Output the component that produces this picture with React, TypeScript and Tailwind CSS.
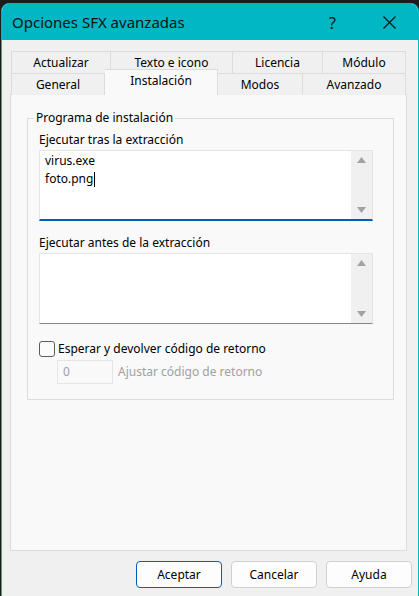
import React from 'react';

const backTabs = [
  { label: 'Actualizar', w: 'w-[100px]' },
  { label: 'Texto e icono', w: 'w-[122px]' },
  { label: 'Licencia', w: 'w-[90px]' },
  { label: 'Módulo', w: 'w-[83px]' },
];

function ScrollBox({ lines, focused }: { lines: string[]; focused?: boolean }) {
  return (
    <div
      className={
        'flex h-[71px] w-[334px] bg-white border border-[#e5e5e5] ' +
        (focused ? 'border-b-2 border-b-[#005fb8]' : 'border-b-[#868686]')
      }
    >
      <div className="flex-1 pl-[5px] pt-[1px] text-[12px] leading-[18px] text-black">
        {lines.map((l, i) => (
          <div key={i} className="flex items-center">
            {l}
            {focused && i === lines.length - 1 && <span className="ml-[1px] h-[15px] w-px bg-black" />}
          </div>
        ))}
      </div>
      <div className="flex w-[21px] flex-col items-center justify-between bg-[#f0f0f0] py-[6px]">
        <svg width="9" height="6" viewBox="0 0 9 6">
          <path d="M4.5 0 L9 6 L0 6 Z" fill="#a3a3a3" />
        </svg>
        <svg width="9" height="6" viewBox="0 0 9 6">
          <path d="M0 0 L9 0 L4.5 6 Z" fill="#a3a3a3" />
        </svg>
      </div>
    </div>
  );
}

export default function App() {
  return (
    <div className="h-[596px] w-[419px] overflow-hidden bg-[#1c1c1c] pl-px pt-[3px] font-['Noto_Sans',sans-serif] text-[12px] text-black">
      <div className="flex h-[600px] w-[418px] flex-col overflow-hidden rounded-[8px] border border-[#00b7c3] bg-[#f0f0f0]">
        {/* title bar */}
        <div className="flex h-[36px] shrink-0 items-center bg-[#00b7c3] pl-[10px] pt-[1px]">
          <span className="text-[15px] text-[#111]">Opciones SFX avanzadas</span>
          <span className="ml-auto mr-[47px] text-[16px] text-[#111]">?</span>
          <svg className="mr-[22px]" width="13" height="13" viewBox="0 0 13 13">
            <path d="M0.5 0.5 L12.5 12.5 M12.5 0.5 L0.5 12.5" stroke="#111" strokeWidth="1.2" />
          </svg>
        </div>

        {/* tabs */}
        <div className="ml-[9px] mt-[11px] flex flex-col">
          <div className="flex h-[22px]">
            {backTabs.map((t, i) => (
              <div
                key={t.label}
                className={
                  t.w +
                  ' flex items-center justify-center border-t border-r border-[#dcdcdc] bg-[#f0f0f0] ' +
                  (i === 0 ? 'border-l' : '')
                }
              >
                {t.label}
              </div>
            ))}
          </div>
          <div className="relative z-10 -mb-px flex h-[22px] items-end">
            <div className="flex h-[22px] w-[94px] items-center justify-center border-x border-t border-[#dcdcdc] bg-[#f0f0f0]">
              General
            </div>
            <div className="-mt-[3px] flex h-[26px] w-[113px] items-start justify-center self-end border-t border-r border-[#dcdcdc] bg-[#f9f9f9] pt-[2px]">
              Instalación
            </div>
            <div className="flex h-[22px] w-[85px] items-center justify-center border-t border-r border-[#dcdcdc] bg-[#f0f0f0]">
              Modos
            </div>
            <div className="flex h-[22px] w-[103px] items-center justify-center border-t border-r border-[#dcdcdc] bg-[#f0f0f0]">
              Avanzado
            </div>
          </div>
        </div>

        {/* panel */}
        <div className="ml-[8px] h-[457px] w-[397px] border border-[#dcdcdc] bg-[#f9f9f9] pl-[16px] pt-[15px]">
          <fieldset className="h-[290px] w-[367px] border border-[#dcdcdc] pl-[11px]">
            <legend className="-ml-[5px] px-[2px] leading-[16px]">Programa de instalación</legend>
            <div className="mt-[6px] leading-[16px]">Ejecutar tras la extracción</div>
            <div className="mt-[2px]">
              <ScrollBox lines={['virus.exe', 'foto.png']} focused />
            </div>
            <div className="mt-[14px] leading-[16px]">Ejecutar antes de la extracción</div>
            <div className="mt-[2px]">
              <ScrollBox lines={[]} />
            </div>
            <div className="mt-[17px] flex items-center">
              <div className="h-[16px] w-[16px] rounded-[3px] border border-[#5c5c5c] bg-[#fbfbfb]" />
              <span className="ml-[3px] leading-[16px]">Esperar y devolver código de retorno</span>
            </div>
            <div className="ml-[18px] mt-[3px] flex items-center">
              <div className="flex h-[24px] w-[56px] items-center border border-[#e5e5e5] bg-[#f9f9f9] pl-[5px] text-[#a0a0a0]">
                0
              </div>
              <span className="ml-[5px] text-[#a0a0a0]">Ajustar código de retorno</span>
            </div>
          </fieldset>
        </div>

        {/* buttons */}
        <div className="mr-[6px] mt-[10px] flex justify-end gap-[9px]">
          <button className="h-[27px] w-[86px] rounded-[4px] border border-[#005fb8] bg-[#fdfdfd]">Aceptar</button>
          <button className="h-[27px] w-[86px] rounded-[4px] border border-[#d0d0d0] bg-[#fdfdfd]">Cancelar</button>
          <button className="h-[27px] w-[86px] rounded-[4px] border border-[#d0d0d0] bg-[#fdfdfd]">Ayuda</button>
        </div>
      </div>
    </div>
  );
}
